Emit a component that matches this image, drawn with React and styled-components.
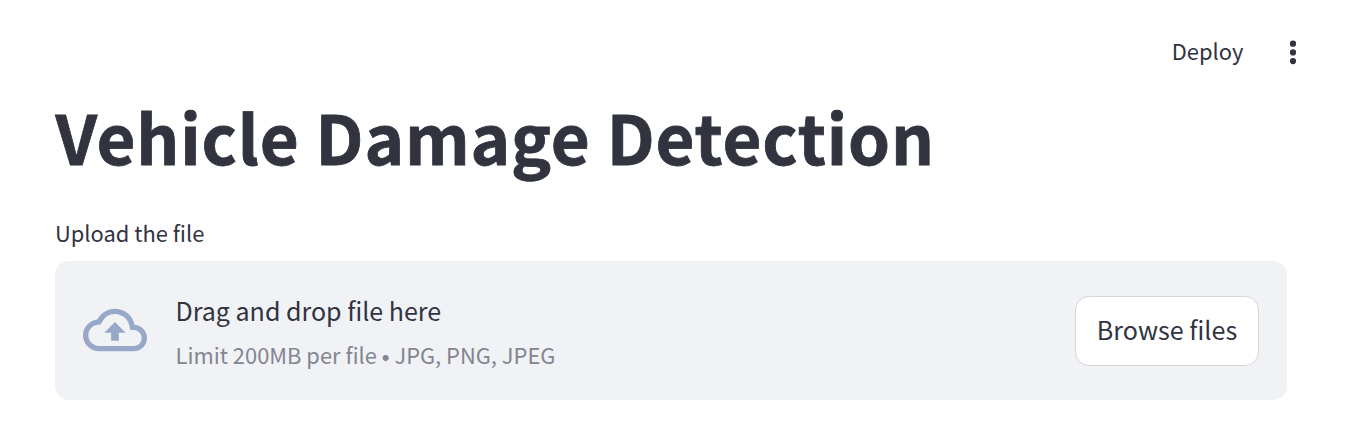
import React from 'react';
import styled, { createGlobalStyle } from 'styled-components';

const Global = createGlobalStyle`
  *, *::before, *::after { box-sizing: border-box; }
  body {
    margin: 0;
    background: #fff;
    color: #31333f;
    font-family: "Noto Sans CJK SC", "Noto Sans CJK JP", sans-serif;
  }
`;

const Page = styled.div`
  width: 1346px;
  height: 442px;
  padding: 31px 59px 0 55px;
  overflow: hidden;
`;

const Toolbar = styled.header`
  display: flex;
  justify-content: flex-end;
  align-items: center;
  height: 40px;
  margin-right: -13px;
`;

const ToolbarButton = styled.button`
  display: flex;
  align-items: center;
  padding: 0;
  border: 0;
  background: none;
  color: inherit;
  font: 400 21.9px/40px "Noto Sans CJK SC", sans-serif;
`;

const MenuIcon = styled.svg`
  display: block;
  width: 14px;
  height: 32px;
  margin-left: 42.7px;
  fill: currentColor;
`;

const Title = styled.h1`
  margin: 19px 0 0;
  padding-left: 0.4px;
  font-size: 67.2px;
  line-height: 92px;
  font-weight: 700;
  letter-spacing: 0.83px;
  white-space: nowrap;
  -webkit-text-stroke: 0.8px currentColor;
`;

const Label = styled.label`
  display: block;
  margin-top: 33px;
  font-size: 21.9px;
  line-height: 36px;
`;

const Dropzone = styled.section`
  display: flex;
  align-items: center;
  width: 1232px;
  height: 139px;
  margin-top: 10px;
  padding: 0 28px;
  border-radius: 14px;
  background: #f0f2f6;
`;

const CloudIcon = styled.svg`
  width: 64px;
  height: 64px;
  margin: -1px 28.5px 0 0;
  fill: #98a8c9;
`;

const Instructions = styled.div`
  display: flex;
  flex-direction: column;
  flex: 1;
  padding-top: 2px;
`;

const Prompt = styled.span`
  font-size: 25.02px;
  line-height: 44px;
`;

const Hint = styled.small`
  color: #83858f;
  font-size: 21.9px;
  line-height: 46px;
  margin-bottom: -2px;
`;

const Bullet = styled.span`
  font-family: "Liberation Sans", sans-serif;
  line-height: 0;
  vertical-align: -1px;
`;

const BrowseButton = styled.button`
  width: 184px;
  height: 70px;
  padding: 0 0 4px;
  border: 1px solid #d5d6d9;
  border-radius: 14px;
  background: #fff;
  color: inherit;
  font: 400 25.1px/40px "Noto Sans CJK SC", sans-serif;
`;

export default function App() {
  return (
    <>
      <Global />
      <Page>
        <Toolbar>
          <ToolbarButton>Deploy</ToolbarButton>
          <ToolbarButton aria-label="Main menu">
            <MenuIcon viewBox="0 0 14 32">
              <circle cx="7" cy="8.7" r="3.1" />
              <circle cx="7" cy="17.4" r="3.1" />
              <circle cx="7" cy="26.1" r="3.1" />
            </MenuIcon>
          </ToolbarButton>
        </Toolbar>
        <Title>Vehicle Damage Detection</Title>
        <Label>Upload the file</Label>
        <Dropzone>
          <CloudIcon viewBox="0 0 24 24">
            <path d="M19.35 10.04A7.49 7.49 0 0 0 12 4C9.11 4 6.6 5.64 5.35 8.04A5.994 5.994 0 0 0 0 14c0 3.31 2.69 6 6 6h13c2.76 0 5-2.24 5-5 0-2.64-2.05-4.78-4.65-4.96zM19 18H6c-2.21 0-4-1.79-4-4 0-2.05 1.53-3.76 3.56-3.97l1.07-.11.5-.95A5.469 5.469 0 0 1 12 6c2.62 0 4.88 1.86 5.39 4.43l.3 1.5 1.53.11A2.98 2.98 0 0 1 22 15c0 1.65-1.35 3-3 3zM8 13h2.55v3h2.9v-3H16l-4-4z" />
          </CloudIcon>
          <Instructions>
            <Prompt>Drag and drop file here</Prompt>
            <Hint>Limit 200MB per file <Bullet>•</Bullet> JPG, PNG, JPEG</Hint>
          </Instructions>
          <BrowseButton>Browse files</BrowseButton>
        </Dropzone>
      </Page>
    </>
  );
}
